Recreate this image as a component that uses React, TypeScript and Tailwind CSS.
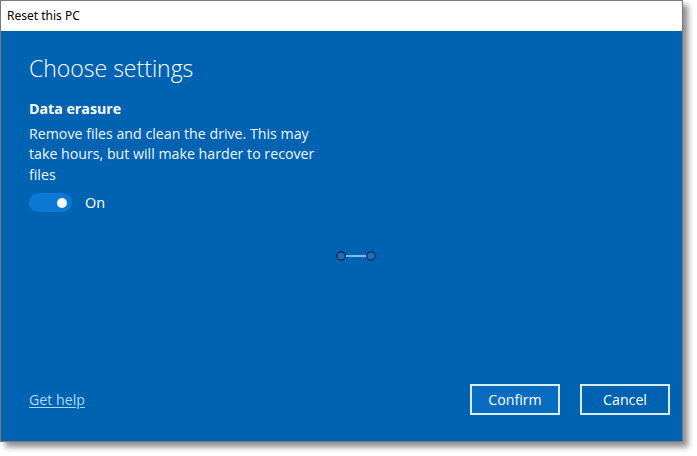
import React from "react";

const font = { fontFamily: '"Open Sans", "Noto Sans", sans-serif' };

function Toggle() {
  return (
    <div className="flex items-center gap-[13px]">
      <div className="w-[43px] h-[19px] rounded-full bg-[#0a78d4] flex items-center justify-end pr-[5px]">
        <div className="w-[10px] h-[10px] rounded-full bg-white" />
      </div>
      <span className="text-[14.5px] text-white">On</span>
    </div>
  );
}

function Spinner() {
  return (
    <svg width="44" height="14" viewBox="0 0 44 14">
      <line x1="11" y1="7" x2="33" y2="7" stroke="#dfefff" strokeWidth="1.2" />
      <circle cx="7" cy="7" r="4.2" fill="#1d6fb8" stroke="#0b2a4a" strokeWidth="1.2" />
      <circle cx="37" cy="7" r="4.2" fill="#1d6fb8" stroke="#0b2a4a" strokeWidth="1.2" />
    </svg>
  );
}

export default function App() {
  return (
    <div className="w-[697px] h-[456px] bg-white" style={font}>
      <div className="w-[683px] h-[442px] border border-[#7a7a7a] flex flex-col shadow-[5px_5px_6px_rgba(0,0,0,0.45)]">
        {/* Title bar */}
        <div className="h-[30px] bg-white flex items-center px-[6px]">
          <span className="text-[12px] text-black" style={{ fontFamily: '"Noto Sans", sans-serif' }}>
            Reset this PC
          </span>
        </div>

        {/* Body */}
        <div className="flex-1 bg-[#0063b1] flex flex-col pl-[28px] pr-[12px] pt-[21px] pb-[26px] text-white">
          <h1 className="text-[23px] font-light leading-[32px]">Choose settings</h1>
          <div className="mt-[15px] text-[14.2px] font-bold leading-[20px]">Data erasure</div>
          <p className="mt-[5px] w-[300px] text-[14.2px] leading-[20.3px] text-[#f0f6ff]">
            Remove files and clean the drive. This may take hours, but will make harder to recover files
          </p>
          <div className="mt-[7px]">
            <Toggle />
          </div>

          <div className="flex justify-center mt-[35px] pl-[12px]">
            <Spinner />
          </div>

          <div className="mt-auto flex items-center justify-between">
            <a className="text-[14.2px] text-[#a8d8ff] underline underline-offset-2">Get help</a>
            <div className="flex gap-[20px]">
              <button className="w-[90px] h-[31px] border-2 border-[#d8ecff] text-[14.2px] text-white bg-[#0a6cc0]">
                Confirm
              </button>
              <button className="w-[90px] h-[31px] border-2 border-[#d8ecff] text-[14.2px] text-white">
                Cancel
              </button>
            </div>
          </div>
        </div>
      </div>
    </div>
  );
}
